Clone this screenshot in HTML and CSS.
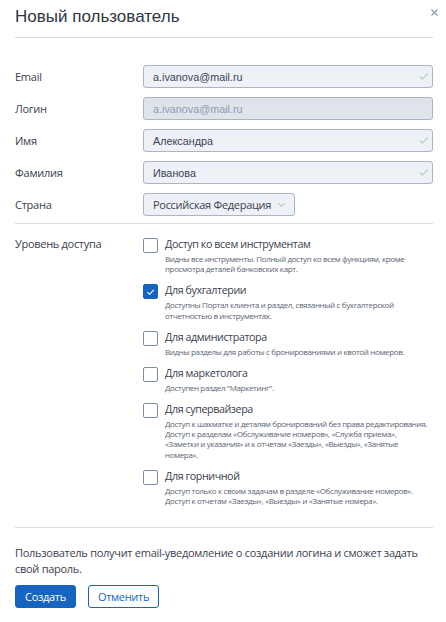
FILE: index.html
```html
<!DOCTYPE html>
<html lang="ru">
<head>
<meta charset="utf-8">
<title>Новый пользователь</title>
<link rel="stylesheet" href="styles.css">
</head>
<body>
<div class="modal">
  <header class="modal-head">
    <h1 class="title">Новый пользователь</h1>
    <button class="close" aria-label="Закрыть">
      <svg width="7" height="7" viewBox="0 0 7 7"><path d="M0.5 0.5L6.5 6.5M6.5 0.5L0.5 6.5" stroke="#8c99ad" stroke-width="1.1" fill="none"/></svg>
    </button>
  </header>

  <section class="fields">
    <div class="row">
      <label class="lbl">Email</label>
      <div class="input valid"><span class="val">a.ivanova@mail.ru</span>
        <svg class="ok" width="10" height="7" viewBox="0 0 10 7"><path d="M0.8 3.6L3.4 6L9.2 0.6" stroke="#7cc383" stroke-width="1" fill="none"/></svg>
      </div>
    </div>
    <div class="row">
      <label class="lbl">Логин</label>
      <div class="input disabled"><span class="val">a.ivanova@mail.ru</span></div>
    </div>
    <div class="row">
      <label class="lbl">Имя</label>
      <div class="input valid"><span class="val">Александра</span>
        <svg class="ok" width="10" height="7" viewBox="0 0 10 7"><path d="M0.8 3.6L3.4 6L9.2 0.6" stroke="#7cc383" stroke-width="1" fill="none"/></svg>
      </div>
    </div>
    <div class="row">
      <label class="lbl">Фамилия</label>
      <div class="input valid"><span class="val">Иванова</span>
        <svg class="ok" width="10" height="7" viewBox="0 0 10 7"><path d="M0.8 3.6L3.4 6L9.2 0.6" stroke="#7cc383" stroke-width="1" fill="none"/></svg>
      </div>
    </div>
    <div class="row">
      <label class="lbl">Страна</label>
      <div class="select"><span class="sel-val">Российская Федерация</span>
        <svg class="chev" width="7" height="4" viewBox="0 0 7 4"><path d="M0.5 0.5L3.5 3.3L6.5 0.5" stroke="#98a3b5" stroke-width="0.9" fill="none"/></svg>
      </div>
    </div>
  </section>

  <section class="access">
    <div class="lbl access-lbl">Уровень доступа</div>
    <ul class="options">
      <li class="opt">
        <span class="box"></span>
        <div class="opt-body">
          <div class="opt-title">Доступ ко всем инструментам</div>
          <div class="opt-desc">Видны все инструменты. Полный доступ ко всем функциям, кроме<br>просмотра деталей банковских карт.</div>
        </div>
      </li>
      <li class="opt">
        <span class="box checked">
          <svg width="14" height="14" viewBox="0 0 14 14"><path d="M3.6 7.2L6 9.4L10.6 4.8" stroke="#ffffff" stroke-width="1.1" fill="none"/></svg>
        </span>
        <div class="opt-body">
          <div class="opt-title">Для бухгалтерии</div>
          <div class="opt-desc">Доступны Портал клиента и раздел, связанный с бухгалтерской<br>отчетностью в инструментах.</div>
        </div>
      </li>
      <li class="opt">
        <span class="box"></span>
        <div class="opt-body">
          <div class="opt-title">Для администратора</div>
          <div class="opt-desc">Видны разделы для работы с бронированиями и квотой номеров.</div>
        </div>
      </li>
      <li class="opt">
        <span class="box"></span>
        <div class="opt-body">
          <div class="opt-title">Для маркетолога</div>
          <div class="opt-desc">Доступен раздел "Маркетинг".</div>
        </div>
      </li>
      <li class="opt">
        <span class="box"></span>
        <div class="opt-body">
          <div class="opt-title">Для супервайзера</div>
          <div class="opt-desc">Доступ к шахматке и деталям бронирований без права редактирования.<br>Доступ к разделам «Обслуживание номеров», «Служба приема»,<br>«Заметки и указания» и к отчетам «Заезды», «Выезды», «Занятые<br>номера».</div>
        </div>
      </li>
      <li class="opt">
        <span class="box"></span>
        <div class="opt-body">
          <div class="opt-title">Для горничной</div>
          <div class="opt-desc">Доступ только к своим задачам в разделе «Обслуживание номеров».<br>Доступ к отчетам «Заезды», «Выезды» и «Занятые номера».</div>
        </div>
      </li>
    </ul>
  </section>

  <footer class="modal-foot">
    <p class="note">Пользователь получит email-уведомление о создании логина и сможет задать<br>свой пароль.</p>
    <div class="actions">
      <button class="btn btn-primary">Создать</button>
      <button class="btn btn-secondary">Отменить</button>
    </div>
  </footer>
</div>
</body>
</html>
```

FILE: styles.css
```css
* { box-sizing: border-box; }

html, body {
  margin: 0;
  padding: 0;
  background: #ffffff;
}

body {
  font-family: "Open Sans", "Liberation Sans", sans-serif;
  color: #3a4150;
}

.modal {
  position: relative;
  width: 446px;
  padding: 0 13px 0 15px;
}

.modal-head {
  padding: 7px 0 10px;
  border-bottom: 1px solid #d3dae4;
}

.title {
  margin: 0;
  font-family: "Liberation Sans", Arial, sans-serif;
  font-weight: normal;
  font-size: 17px;
  line-height: 20px;
  color: #2f3642;
}

.close {
  position: absolute;
  top: 8px;
  right: 7px;
  width: 9px;
  height: 9px;
  padding: 1px;
  border: 0;
  background: none;
  display: flex;
  align-items: center;
  justify-content: center;
}

.fields {
  padding: 27px 0 7px;
  border-bottom: 1px solid #d3dae4;
  display: flex;
  flex-direction: column;
  gap: 9px;
}

.row {
  display: flex;
  align-items: center;
}

.lbl {
  width: 128px;
  flex: none;
  font-size: 11px;
  line-height: 16px;
  letter-spacing: -0.25px;
  color: #3a4150;
}

.input {
  width: 290px;
  height: 23px;
  border: 1px solid #a9b5c7;
  border-radius: 3px;
  background: #eef2f6;
  padding: 0 9px 0 9px;
  display: flex;
  align-items: center;
  font-family: "Liberation Sans", Arial, sans-serif;
  font-size: 10.8px;
  color: #3c4454;
}

.input .val { flex: 1; }

.input.disabled {
  background: #dfe4eb;
  color: #8d9ab0;
}

.ok { flex: none; margin-right: -6px; margin-top: -1px; }

.select {
  width: 152px;
  height: 23px;
  border: 1px solid #a9b5c7;
  border-radius: 3px;
  background: #eef2f6;
  padding: 0 9px;
  display: flex;
  align-items: center;
  gap: 7px;
  font-size: 11px;
  letter-spacing: -0.3px;
  white-space: nowrap;
  color: #3a4150;
}

.chev { flex: none; }

.access {
  display: flex;
  padding: 12px 0 21px;
  border-bottom: 1px solid #d3dae4;
}

.access-lbl { line-height: 16px; letter-spacing: -0.3px; }

.options {
  list-style: none;
  margin: 0;
  padding: 0;
  flex: 1;
}

.opt {
  display: flex;
  gap: 7px;
  margin-bottom: 7.7px;
}

.opt:last-child { margin-bottom: 0; }

.box {
  flex: none;
  width: 15px;
  height: 15px;
  margin-top: 2px;
  border: 1px solid #7e8ca3;
  border-radius: 2px;
  background: #ffffff;
}

.box.checked {
  background: #1565c0;
  border-color: #1565c0;
  display: flex;
  align-items: center;
  justify-content: center;
}

.opt-body { flex: 1; min-width: 0; }

.opt-title {
  font-size: 10.7px;
  line-height: 16px;
  letter-spacing: -0.4px;
  color: #3a4150;
  margin-bottom: 2px;
}

.opt-desc {
  font-size: 8px;
  line-height: 10.33px;
  color: #5b6473;
  letter-spacing: -0.35px;
  white-space: nowrap;
}

.modal-foot {
  padding-top: 17px;
}

.note {
  margin: 0;
  font-size: 11px;
  line-height: 16px;
  letter-spacing: -0.28px;
  white-space: nowrap;
  color: #3a4150;
}

.actions {
  display: flex;
  gap: 12px;
  margin-top: 8px;
}

.btn {
  height: 23px;
  border-radius: 3px;
  font-family: "Open Sans", sans-serif;
  font-size: 11px;
  letter-spacing: -0.3px;
  padding: 0 9px;
  cursor: pointer;
}

.btn-primary {
  background: #1565c0;
  border: 1px solid #1565c0;
  color: #ffffff;
}

.btn-secondary {
  background: #ffffff;
  border: 1px solid #1565c0;
  color: #1565c0;
}
```
